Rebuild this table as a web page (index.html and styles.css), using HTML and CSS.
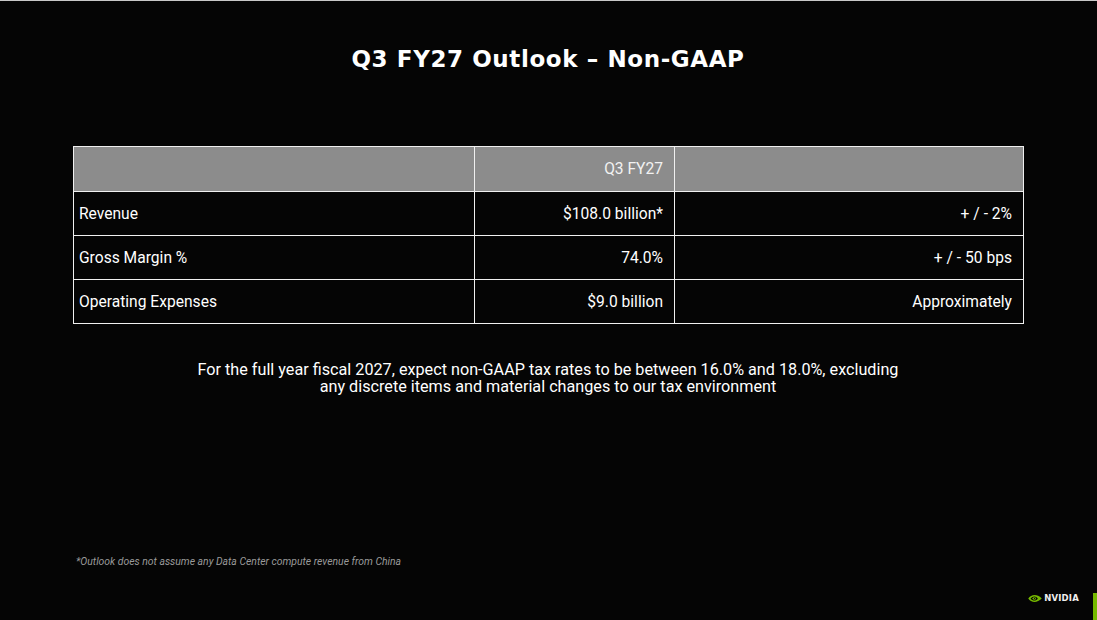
FILE: index.html
```html
<!DOCTYPE html>
<html lang="en">
<head>
<meta charset="utf-8">
<title>Q3 FY27 Outlook – Non-GAAP</title>
<link rel="stylesheet" href="styles.css">
</head>
<body>
<div class="slide">
  <h1 class="title">Q3 FY27 Outlook – Non-GAAP</h1>
  <table class="outlook">
    <colgroup>
      <col class="c1"><col class="c2"><col class="c3">
    </colgroup>
    <thead>
      <tr><th></th><th class="num">Q3 FY27</th><th></th></tr>
    </thead>
    <tbody>
      <tr><td>Revenue</td><td class="num">$108.0 billion*</td><td class="num">+ / - 2%</td></tr>
      <tr><td>Gross Margin %</td><td class="num">74.0%</td><td class="num">+ / - 50 bps</td></tr>
      <tr><td>Operating Expenses</td><td class="num">$9.0 billion</td><td class="num">Approximately</td></tr>
    </tbody>
  </table>
  <p class="note">For the full year fiscal 2027, expect non-GAAP tax rates to be between 16.0% and 18.0%, excluding<br>any discrete items and material changes to our tax environment</p>
  <p class="footnote">*Outlook does not assume any Data Center compute revenue from China</p>
  <div class="bottom">
    <div class="logo">
      <svg class="eye" viewBox="0 0 24 16" width="14" height="9" aria-hidden="true">
        <path d="M0 8 C5 1 15 -1 24 8 C15 17 5 15 0 8 Z" fill="#76b900"/>
        <path d="M4 8 C8 3 14 3 17 8 C14 13 8 13 4 8 Z" fill="#050505"/>
        <path d="M7 8 C9 5 13 5 14 8 C13 11 9 11 7 8 Z" fill="#76b900"/>
        <path d="M10 8 C11 6.5 12 6.5 12.5 8 C12 9.5 11 9.5 10 8 Z" fill="#050505"/>
      </svg>
      <span class="brand">NVIDIA</span>
    </div>
    <div class="bar"></div>
  </div>
</div>
</body>
</html>
```
FILE: styles.css
```css
html, body {
  margin: 0;
  padding: 0;
  background: #050505;
}
body {
  border-top: 1px solid #c8c8c8;
}
.slide {
  height: 619px;
  display: flex;
  flex-direction: column;
  box-sizing: border-box;
  padding: 0 0 0 73px;
  color: #fff;
  font-family: Roboto, "Liberation Sans", sans-serif;
}
.title {
  margin: 43px 74px 0 0;
  text-align: center;
  font-family: "DejaVu Sans", sans-serif;
  font-weight: bold;
  font-size: 23px;
  line-height: 30px;
  letter-spacing: 0.6px;
}
.outlook {
  margin-top: 72px;
  width: 950px;
  border-collapse: collapse;
  table-layout: fixed;
  font-size: 15.6px;
}
.c1 { width: 401px; }
.c2 { width: 200px; }
.c3 { width: 349px; }
.outlook th,
.outlook td {
  border: 1px solid #f0f0f0;
  height: 43px;
  padding: 0 11px 0 5px;
  font-weight: normal;
  text-align: left;
  vertical-align: middle;
}
.outlook th {
  background: #8c8c8c;
  color: #f2f2f2;
  height: 44px;
}
.outlook .num {
  text-align: right;
}
.note {
  margin: 37px 74px 0 0;
  text-align: center;
  font-size: 16.2px;
  line-height: 17px;
}
.footnote {
  margin: 161px 0 0 3px;
  font-size: 10.4px;
  font-style: italic;
  color: #9a9a9a;
  line-height: 12px;
}
.bottom {
  margin-top: auto;
  display: flex;
  justify-content: flex-end;
  align-items: flex-start;
  height: 27px;
}
.logo {
  display: flex;
  align-items: center;
  gap: 2px;
  margin-right: 14px;
}
.eye { display: block; }
.brand {
  font-family: "DejaVu Sans", sans-serif;
  font-weight: bold;
  font-size: 8.5px;
  letter-spacing: 0.2px;
  color: #f0f0f0;
}
.bar {
  width: 4px;
  height: 27px;
  background: #76b900;
}
```
